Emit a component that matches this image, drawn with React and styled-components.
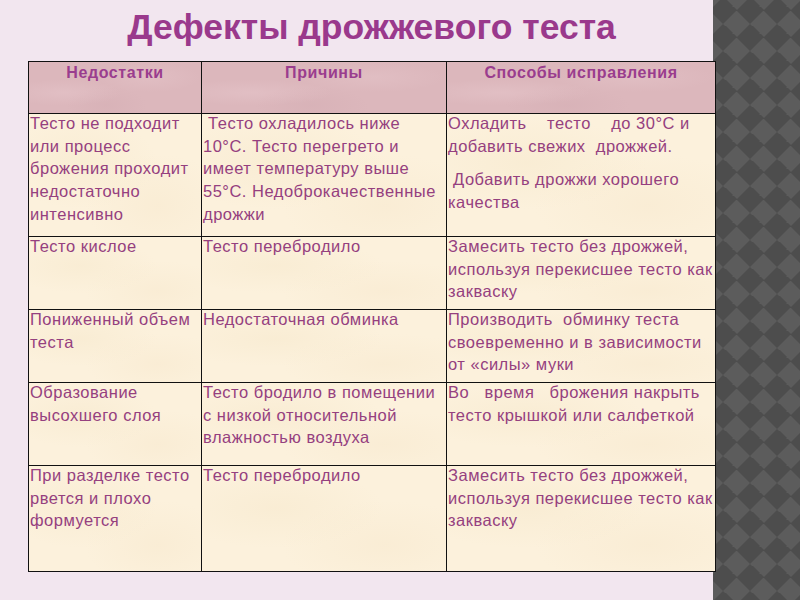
import React from 'react';
import styled, { createGlobalStyle } from 'styled-components';

const GlobalStyle = createGlobalStyle`
  html, body {
    margin: 0;
    padding: 0;
    background: #f2e6ef;
  }
`

const rows = [
  {
    height: 123,
    cells: [
      [['Тесто не подходит', 'или процесс', 'брожения проходит', 'недостаточно', 'интенсивно']],
      [[' Тесто охладилось ниже', '10°С. Тесто перегрето и', 'имеет температуру выше', '55°С. Недоброкачественные', 'дрожжи']],
      [['Охладить    тесто    до 30°С и', 'добавить свежих  дрожжей.'], [' Добавить дрожжи хорошего', 'качества']],
    ],
  },
  {
    height: 73,
    cells: [
      [['Тесто кислое']],
      [['Тесто перебродило']],
      [['Замесить тесто без дрожжей,', 'используя перекисшее тесто как', 'закваску']],
    ],
  },
  {
    height: 73,
    cells: [
      [['Пониженный объем', 'теста']],
      [['Недостаточная обминка']],
      [['Производить  обминку теста', 'своевременно и в зависимости', 'от «силы» муки']],
    ],
  },
  {
    height: 83,
    cells: [
      [['Образование', 'высохшего слоя']],
      [['Тесто бродило в помещении', 'с низкой относительной', 'влажностью воздуха']],
      [['Во   время   брожения накрыть', 'тесто крышкой или салфеткой']],
    ],
  },
  {
    height: 106,
    cells: [
      [['При разделке тесто', 'рвется и плохо', 'формуется']],
      [['Тесто перебродило']],
      [['Замесить тесто без дрожжей,', 'используя перекисшее тесто как', 'закваску']],
    ],
  },
]

const headers = ['Недостатки', 'Причины', 'Способы исправления']

const App = () => {
  return (
    <>
      <GlobalStyle />
      <Page>
        <Main>
          <Title>Дефекты дрожжевого теста</Title>
          <Table>
            {headers.map((h) => (
              <HeadCell key={h}>{h}</HeadCell>
            ))}
            {rows.map((row, i) =>
              row.cells.map((paras, j) => (
                <Cell key={i + '-' + j} $h={row.height}>
                  {paras.map((lines, k) => (
                    <Para key={k}>
                      {lines.map((l, n) => (
                        <Line key={n}>{l}</Line>
                      ))}
                    </Para>
                  ))}
                </Cell>
              ))
            )}
          </Table>
        </Main>
        <Strip />
      </Page>
    </>
  )
}

export default App

const Page = styled.div`
  width: 800px;
  height: 600px;
  display: grid;
  grid-template-columns: 713px 87px;
  overflow: hidden;
  background: #f2e6ef;
`
const Main = styled.div`
  z-index: 1;
  display: flex;
  flex-direction: column;
  padding-left: 28px;
`
const Title = styled.h1`
  margin: 0;
  padding-top: 7px;
  width: 687px;
  text-align: center;
  font-family: "Liberation Sans", Arial, sans-serif;
  font-weight: bold;
  font-size: 35.5px;
  line-height: 41px;
  color: #9a398c;
  height: 54px;
`
const Table = styled.div`
  display: grid;
  grid-template-columns: 173px 245px 269px;
  width: 688px;
  border-top: 1px solid #111;
  border-left: 1px solid #111;
  box-sizing: border-box;
  font-family: "Liberation Sans", Arial, sans-serif;
`
const HeadCell = styled.div`
  height: 52px;
  box-sizing: border-box;
  border-right: 1px solid #111;
  border-bottom: 1px solid #111;
  padding-top: 2px;
  text-align: center;
  font-weight: bold;
  font-size: 16px;
  letter-spacing: 0.6px;
  line-height: 17px;
  color: #9a3d8e;
  background:
    radial-gradient(ellipse at 20% 60%, rgba(235, 205, 210, 0.35), transparent 30%),
    radial-gradient(ellipse at 70% 30%, rgba(235, 205, 210, 0.3), transparent 30%),
    radial-gradient(ellipse at 45% 85%, rgba(205, 165, 172, 0.25), transparent 30%),
    #dcb7bc;
`
const Cell = styled.div`
  height: ${(p) => p.$h}px;
  box-sizing: border-box;
  border-right: 1px solid #111;
  border-bottom: 1px solid #111;
  padding: 0 0 0 1px;
  font-size: 16.5px;
  letter-spacing: 0.5px;
  line-height: 22.7px;
  color: #95407f;
  overflow: hidden;
  background:
    radial-gradient(ellipse at 30% 40%, rgba(246, 232, 204, 0.5), transparent 45%),
    radial-gradient(ellipse at 75% 75%, rgba(246, 230, 202, 0.4), transparent 40%),
    #fcf1dc;
`
const Para = styled.div`
  &:first-child {
    margin-top: -2px;
  }
  & + & {
    margin-top: 11px;
  }
`
const Line = styled.div`
  white-space: pre;
`
const Strip = styled.div`
  background: conic-gradient(from 45deg, #5c5c5c 0 25%, #4d4d4d 0 50%, #5c5c5c 0 75%, #4d4d4d 0);
  background-size: 27px 27px;
  background-position: -3.5px 10px;
`
